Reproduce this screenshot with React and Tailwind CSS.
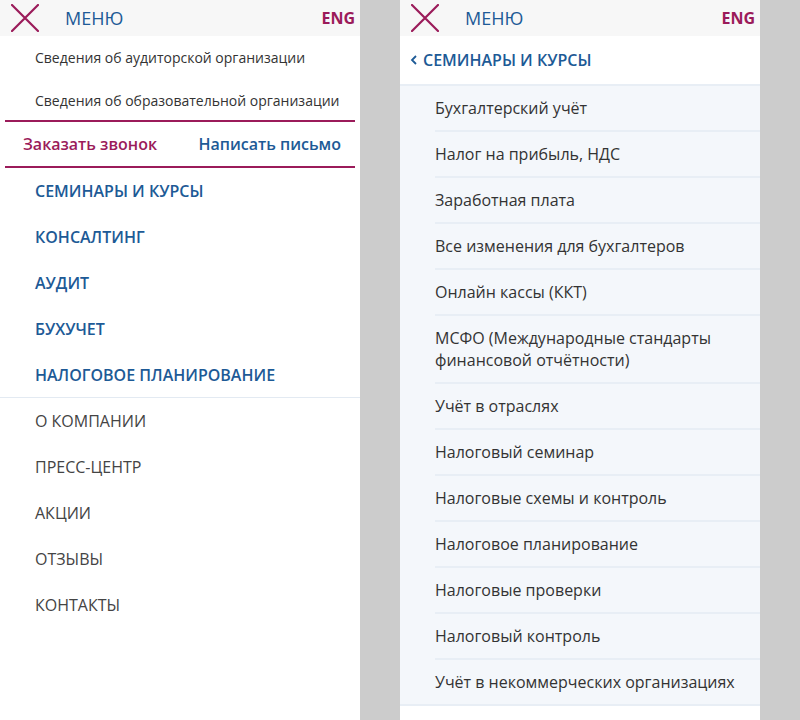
import React from 'react';

const infoLinks = ['Сведения об аудиторской организации', 'Сведения об образовательной организации'];

const mainItems = ['СЕМИНАРЫ И КУРСЫ', 'КОНСАЛТИНГ', 'АУДИТ', 'БУХУЧЕТ', 'НАЛОГОВОЕ ПЛАНИРОВАНИЕ'];

const extraItems = ['О КОМПАНИИ', 'ПРЕСС-ЦЕНТР', 'АКЦИИ', 'ОТЗЫВЫ', 'КОНТАКТЫ'];

const courses = [
  'Бухгалтерский учёт',
  'Налог на прибыль, НДС',
  'Заработная плата',
  'Все изменения для бухгалтеров',
  'Онлайн кассы (ККТ)',
  'МСФО (Международные стандарты финансовой отчётности)',
  'Учёт в отраслях',
  'Налоговый семинар',
  'Налоговые схемы и контроль',
  'Налоговое планирование',
  'Налоговые проверки',
  'Налоговый контроль',
  'Учёт в некоммерческих организациях',
];

const CloseIcon = () => (
  <svg width="28" height="28" viewBox="0 0 28 28" className="shrink-0">
    <path d="M1 1 L27 27 M27 1 L1 27" stroke="#9b1b5a" strokeWidth="2.2" strokeLinecap="round" />
  </svg>
);

const Header = () => (
  <div className="flex h-9 items-center bg-[#f7f7f7] pl-[11px] pr-[5px]">
    <CloseIcon />
    <span className="ml-[26px] text-[18px] leading-none text-[#1d5a96]">МЕНЮ</span>
    <span className="ml-auto text-[16px] font-bold leading-none text-[#9b1b5a]">ENG</span>
  </div>
);

const MenuPanel = () => (
  <div className="w-[360px] shrink-0 bg-white">
    <Header />
    {infoLinks.map((label, i) => (
      <div
        key={label}
        className={`flex items-center pl-[35px] text-[14px] text-[#333] ${i === 0 ? 'h-[43px]' : 'h-[41px] pt-[2px]'}`}
      >
        {label}
      </div>
    ))}
    <div className="mx-[5px] flex h-[48px] items-center justify-between border-y-2 border-[#9b1b5a] pl-[18px] pr-[14px] text-[16px]">
      <span className="font-semibold text-[#9b1b5a]">Заказать звонок</span>
      <span className="font-semibold text-[#1d5a96]">Написать письмо</span>
    </div>
    {mainItems.map((label, i) => (
      <div
        key={label}
        className={`flex items-center pl-[35px] text-[16px] font-semibold text-[#1d5a96] ${
          i === mainItems.length - 1 ? 'h-[45px]' : 'h-[46px]'
        }`}
      >
        {label}
      </div>
    ))}
    <div className="border-t border-[#e3eaf2]">
      {extraItems.map((label) => (
        <div key={label} className="flex h-[46px] items-center pl-[35px] text-[16px] text-[#444]">
          {label}
        </div>
      ))}
    </div>
  </div>
);

const CoursesPanel = () => (
  <div className="w-[360px] shrink-0 bg-white">
    <Header />
    <div className="flex h-[48px] items-center pl-[10px] text-[16px] font-semibold text-[#1d5a96]">
      <svg width="8" height="10" viewBox="0 0 8 10" className="mr-[5px]">
        <path d="M6 1 L2 5 L6 9" fill="none" stroke="#1d5a96" strokeWidth="1.8" />
      </svg>
      СЕМИНАРЫ И КУРСЫ
    </div>
    <div className="border-y-2 border-[#e8eef5] bg-[#f4f7fb]">
      {courses.map((label, i) => (
        <div key={label} className="pl-[35px]">
          <div
            className={`flex min-h-[44px] items-center py-[11px] pr-[10px] text-[16px] leading-[22px] text-[#333] ${
              i < courses.length - 1 ? 'border-b-2 border-[#e8eef5]' : ''
            }`}
          >
            <span className={label.startsWith('МСФО') ? 'max-w-[290px]' : ''}>{label}</span>
          </div>
        </div>
      ))}
    </div>
  </div>
);

export default function App() {
  return (
    <div className="flex h-[720px] w-[800px] overflow-hidden bg-[#cccccc] font-['Open_Sans',sans-serif]">
      <MenuPanel />
      <div className="w-10 shrink-0" />
      <CoursesPanel />
    </div>
  );
}
